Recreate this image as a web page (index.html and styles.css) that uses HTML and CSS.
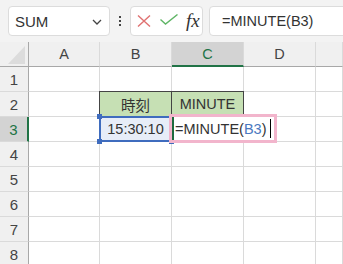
FILE: index.html
```html
<!DOCTYPE html>
<html lang="ja">
    <head>
        <meta charset="UTF-8">
        <meta name="viewport" content="width=device-width, initial-scale=1.0">
        <title>MINUTE</title>
        <link rel="stylesheet" href="styles.css">
    </head>
    <body>
        <div class="toolbar">
            <div class="nameBox">
                <span>SUM</span>
                <svg class="chevron" width="10" height="6" viewBox="0 0 10 6"><path d="M1 1 L5 5 L9 1" fill="none" stroke="#444" stroke-width="1.3"/></svg>
            </div>
            <div class="dots"><i></i><i></i><i></i></div>
            <div class="buttons">
                <svg width="14" height="12" viewBox="0 0 14 12"><path d="M1 0.5 L13 11.5 M13 0.5 L1 11.5" stroke="#e07272" stroke-width="1.4" fill="none"/></svg>
                <svg width="18" height="11" viewBox="0 0 18 11"><path d="M0.5 5.5 L5.5 10 L17.5 0.5" stroke="#5fb566" stroke-width="1.4" fill="none"/></svg>
                <span class="fx">fx</span>
            </div>
            <div class="formulaBar">=MINUTE(B3)</div>
        </div>
        <div class="sheet">
            <div class="corner"></div>
            <div class="colHead">A</div>
            <div class="colHead">B</div>
            <div class="colHead active">C</div>
            <div class="colHead">D</div>
            <div class="colHead"></div>

            <div class="rowHead">1</div>
            <div class="cell"></div><div class="cell"></div><div class="cell"></div><div class="cell"></div><div class="cell"></div>

            <div class="rowHead">2</div>
            <div class="cell"></div>
            <div class="cell header first">時刻</div>
            <div class="cell header">MINUTE</div>
            <div class="cell"></div><div class="cell"></div>

            <div class="rowHead active">3</div>
            <div class="cell"></div>
            <div class="cell time">15:30:10<i class="handle tl"></i><i class="handle bl"></i><i class="handle br"></i></div>
            <div class="cell editing">
                <div class="editor">=MINUTE(<span class="ref">B3</span>)<span class="caret"></span></div>
            </div>
            <div class="cell"></div><div class="cell"></div>

            <div class="rowHead">4</div>
            <div class="cell"></div><div class="cell"></div><div class="cell"></div><div class="cell"></div><div class="cell"></div>
            <div class="rowHead">5</div>
            <div class="cell"></div><div class="cell"></div><div class="cell"></div><div class="cell"></div><div class="cell"></div>
            <div class="rowHead">6</div>
            <div class="cell"></div><div class="cell"></div><div class="cell"></div><div class="cell"></div><div class="cell"></div>
            <div class="rowHead">7</div>
            <div class="cell"></div><div class="cell"></div><div class="cell"></div><div class="cell"></div><div class="cell"></div>
            <div class="rowHead">8</div>
            <div class="cell"></div><div class="cell"></div><div class="cell"></div><div class="cell"></div><div class="cell"></div>
        </div>
    </body>
</html>
```

FILE: styles.css
```css
body {
    margin: 0;
    overflow: hidden;
    background: #fff;
    font-family: "Liberation Sans", "Noto Sans CJK JP", sans-serif;
    color: #333;
}
.toolbar {
    height: 42px;
    background: #f3f3f3;
    display: flex;
    align-items: center;
    padding-left: 8px;
    box-sizing: border-box;
}
.nameBox, .buttons, .formulaBar {
    height: 30px;
    box-sizing: border-box;
    background: #fff;
    border: 1px solid #dcdcdc;
    border-radius: 4px;
    display: flex;
    align-items: center;
}
.nameBox {
    width: 102px;
    padding: 0 7px 0 6px;
    justify-content: space-between;
    font-size: 15px;
}
.chevron {
    margin-top: 2px;
}
.dots {
    width: 20px;
    display: flex;
    flex-direction: column;
    align-items: center;
    gap: 2px;
}
.dots i {
    width: 2px;
    height: 2px;
    background: #444;
}
.buttons {
    width: 73px;
    padding-left: 6px;
    gap: 9px;
}
.buttons svg:nth-child(2) {
    margin-top: -3px;
}
.fx {
    font-family: "Liberation Serif", serif;
    font-style: italic;
    font-size: 19px;
    color: #333;
    margin-left: -1px;
}
.formulaBar {
    flex: 1;
    margin-left: 6px;
    margin-right: -8px;
    padding-left: 12px;
    font-size: 14.5px;
}
.sheet {
    display: grid;
    grid-template-columns: 29px 71px 72px 72px 72px 1fr;
    grid-template-rows: 25px;
    grid-auto-rows: 25px;
    font-size: 14.5px;
}
.sheet > div {
    box-sizing: border-box;
    border-right: 1px solid #dadada;
    border-bottom: 1px solid #dadada;
    display: flex;
    align-items: center;
    justify-content: center;
}
.corner, .colHead, .rowHead {
    background: #f0f0f0;
    color: #444;
}
.rowHead {
    font-size: 15px;
}
.corner {
    position: relative;
    border-bottom-color: #a8a8a8 !important;
    border-right-color: #a8a8a8 !important;
}
.corner::after {
    content: "";
    position: absolute;
    right: 3px;
    bottom: 2px;
    border-left: 17px solid transparent;
    border-bottom: 18px solid #dcdcdc;
}
.colHead {
    border-bottom-color: #a8a8a8 !important;
}
.rowHead {
    border-right-color: #a8a8a8 !important;
    border-bottom-color: #dadada;
}
.colHead.active {
    background: #d3d3d3;
    color: #217346;
    border-bottom: 2px solid #217346 !important;
}
.rowHead.active {
    background: #d3d3d3;
    color: #217346;
    border-right: 2px solid #217346 !important;
}
.cell.header {
    background: #c6e0b4;
    border-top: 1px solid #444;
    border-right: 1px solid #444;
    border-bottom: 1px solid #444;
    margin-top: -1px;
    height: 26px;
}
.cell.header.first {
    border-left: 1px solid #444;
    margin-left: -1px;
}
.cell.time {
    position: relative;
    background: #e7edf8;
    border: 2px solid #3f6cbe;
    margin: -1px 0 0 -1px;
    height: 26px;
}
.handle {
    position: absolute;
    width: 5px;
    height: 5px;
    background: #3f6cbe;
}
.tl { left: -4px; top: -4px; }
.bl { left: -4px; bottom: -4px; }
.br { right: -4px; bottom: -4px; }
.cell.editing {
    position: relative;
}
.editor {
    position: absolute;
    left: -3px;
    top: -3px;
    width: 108px;
    height: 29px;
    box-sizing: border-box;
    border: 3px solid #f2b5cc;
    background: #fff;
    display: flex;
    align-items: center;
    padding-left: 3px;
    font-size: 14.5px;
    color: #333;
    z-index: 2;
}
.editor::before {
    content: "";
    position: absolute;
    left: 0;
    top: 0;
    bottom: 0;
    width: 2px;
    background: #1e6b3e;
}
.ref {
    color: #4a78c0;
}
.caret {
    width: 1px;
    height: 19px;
    background: #000;
    margin-left: 4px;
}
```
